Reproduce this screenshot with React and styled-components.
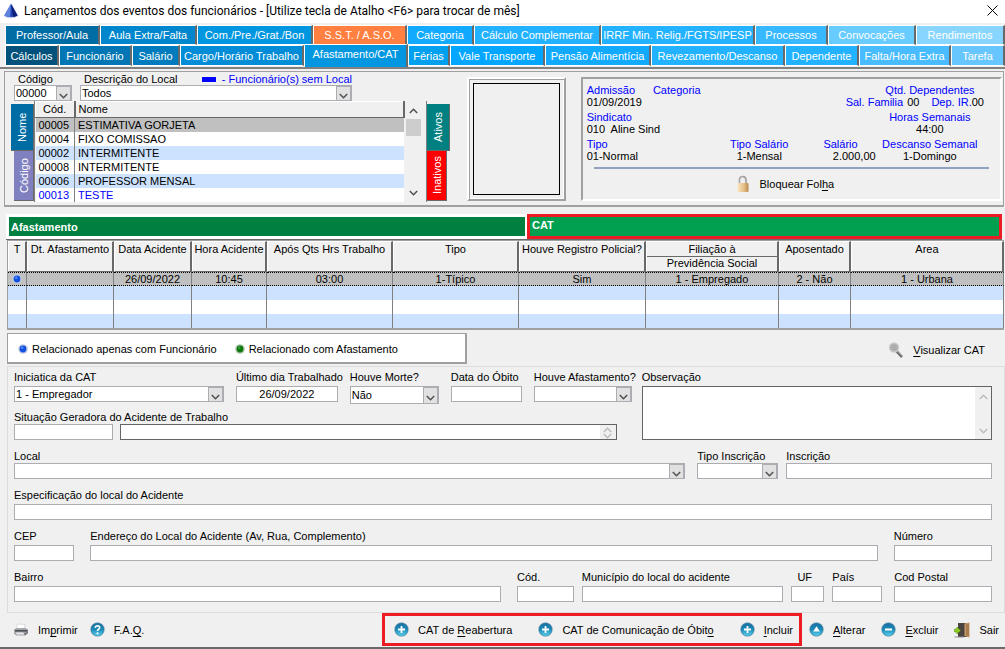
import React from 'react';
import styled, { createGlobalStyle, css } from 'styled-components';

const tabsTop = [
    { label: 'Professor/Aula', color: '#006ca4', size: 95 },
    { label: 'Aula Extra/Falta', color: '#0086cc', size: 97 },
    { label: 'Com./Pre./Grat./Bon', color: '#0096e0', size: 116 },
    { label: 'S.S.T. / A.S.O.', color: '#ff8040', size: 94 },
    { label: 'Categoria', color: '#12aaff', size: 67 },
    { label: 'Cálculo Complementar', color: '#22b2ff', size: 127 },
    { label: 'IRRF Min. Relig./FGTS/IPESP', color: '#22b2ff', size: 154 },
    { label: 'Processos', color: '#38b8ff', size: 73 },
    { label: 'Convocações', color: '#68ccff', size: 88 },
    { label: 'Rendimentos', color: '#88d6ff', size: 89 },
];

const tabsBottom = [
    { label: 'Cálculos', color: '#00527c', size: 54 },
    { label: 'Funcionário', color: '#0076b4', size: 73 },
    { label: 'Salário', color: '#007cbe', size: 48 },
    { label: 'Cargo/Horário Trabalho', color: '#008cd6', size: 124 },
    { label: 'Afastamento/CAT', color: '#0096e0', size: 104, active: true },
    { label: 'Férias', color: '#00a0f0', size: 42 },
    { label: 'Vale Transporte', color: '#00a6ff', size: 95 },
    { label: 'Pensão Alimentícia', color: '#12aaff', size: 106 },
    { label: 'Revezamento/Descanso', color: '#22b2ff', size: 134 },
    { label: 'Dependente', color: '#22b2ff', size: 74 },
    { label: 'Falta/Hora Extra', color: '#48bcff', size: 92 },
    { label: 'Tarefa', color: '#68c6ff', size: 54 },
];

const employees = [
    { code: '00005', name: 'ESTIMATIVA GORJETA', selected: true },
    { code: '00004', name: 'FIXO COMISSAO' },
    { code: '00002', name: 'INTERMITENTE' },
    { code: '00008', name: 'INTERMITENTE' },
    { code: '00006', name: 'PROFESSOR MENSAL' },
    { code: '00013', name: 'TESTE', noPlace: true },
];

const catColumns = [
    { title: 'T', size: 19 },
    { title: 'Dt. Afastamento', size: 87 },
    { title: 'Data Acidente', size: 78 },
    { title: 'Hora Acidente', size: 75 },
    { title: 'Após Qts Hrs Trabalho', size: 126 },
    { title: 'Tipo', size: 126 },
    { title: 'Houve Registro Policial?', size: 127 },
    { title: 'Filiação à', subtitle: 'Previdência Social', size: 133 },
    { title: 'Aposentado', size: 72 },
    { title: 'Area', size: 153 },
];
const catTotal = catColumns.reduce((sum, col) => sum + col.size, 0);

const catRow = ['', '', '26/09/2022', '10:45', '03:00', '1-Típico', 'Sim', '1 - Empregado', '2 - Não', '1 - Urbana'];

/* Icons */

const LogoIcon = () => (
    <svg width='16' height='16' viewBox='0 0 16 16'>
        <path d='M7.5 1 L0.5 13 Q4 15.5 8 15.3 Q12 15.3 15.5 13 L9 1 Z' fill='#c3cbe8' />
        <path d='M8 1 L1.5 12.5 Q4.5 14 8 14 Q11.5 14 14.5 12.5 Z' fill='#2346b8' />
        <path d='M8 1 L1.5 12.5 Q4 13.8 7 14 Z' fill='#5f84e0' />
        <path d='M8 1 L10 14 Q12.5 13.6 14.5 12.5 Z' fill='#0c1f78' />
    </svg>
);

const CloseIcon = () => (
    <svg width='11' height='11' viewBox='0 0 11 11' stroke='#000' fill='none'>
        <path d='M0.5 0.5 L10.5 10.5 M10.5 0.5 L0.5 10.5' />
    </svg>
);

const Chevron = ({ up, color = '#505050' }) => (
    <svg width='9' height='6' viewBox='0 0 9 6' fill='none' stroke={color} strokeWidth='1.5'>
        <path d={up ? 'M0.8 5 L4.5 1.3 L8.2 5' : 'M0.8 1 L4.5 4.7 L8.2 1'} />
    </svg>
);

const LockIcon = () => (
    <svg width='14' height='18' viewBox='0 0 14 18'>
        <defs>
            <linearGradient id='lockBody' x1='0' x2='1'>
                <stop offset='0' stopColor='#fbe7c4' />
                <stop offset='0.6' stopColor='#e3bd85' />
                <stop offset='1' stopColor='#b98a4c' />
            </linearGradient>
        </defs>
        <path d='M3.6 9 V5 Q3.6 1.6 6.8 1.6 Q10 1.6 10 5 V9' fill='none' stroke='#a4a4a4' strokeWidth='1.8' />
        <path d='M4.4 9 V5 Q4.6 2.4 6.8 2.2' fill='none' stroke='#e4e4e4' strokeWidth='0.8' />
        <rect x='1.5' y='8' width='11' height='9' rx='1' fill='url(#lockBody)' />
    </svg>
);

const LensIcon = () => (
    <svg width='16' height='16' viewBox='0 0 16 16'>
        <path d='M8.5 9 L14 15' stroke='#6c6c6c' strokeWidth='2.6' />
        <path d='M9 8.5 L14.5 14' stroke='#c9c9c9' strokeWidth='0.9' />
        <circle cx='6' cy='5.5' r='4.6' fill='#b4b4b4' stroke='#cccccc' strokeWidth='1.2' />
        <path d='M3.2 3.6 H8.8 M2.8 5.5 H9.2 M3.2 7.4 H8.8' stroke='#a0a0a0' strokeWidth='0.6' />
    </svg>
);

const PrinterIcon = () => (
    <svg width='16' height='14' viewBox='0 0 16 14'>
        <path d='M4.5 1 L12 1.5 L11 6 L3.5 6 Z' fill='#fff' stroke='#c8c8c8' strokeWidth='0.6' />
        <path d='M1 6.5 L3.5 5 H12.5 L15 6.5 V10 L12 12.5 H3 L1 10.5 Z' fill='#a4a7ac' />
        <path d='M2 7 H14.5 V8.6 H2 Z' fill='#4a4d52' />
        <path d='M2.5 9.5 H10 L11.5 11.5 H4 Z' fill='#e8e8e8' />
        <path d='M11 10.5 L15 8.8 V10 L12 12.5 Z' fill='#6f7277' />
    </svg>
);

const DoorIcon = () => (
    <svg width='16' height='16' viewBox='0 0 16 16'>
        <path d='M4 1 H14 V15 H4 Z' fill='#4b4542' />
        <path d='M10.5 1.5 L15.5 0.5 V15.5 L10.5 14 Z' fill='#c79a68' />
        <path d='M12 2 L15 1.5 V14.5 L12 13.5 Z' fill='#a87c4d' />
        <path d='M0.5 7 H3 V5 L6.5 8.5 L3 12 V10 H0.5 Z' fill='#8fce1f' stroke='#5c9410' strokeWidth='0.6' />
        <path d='M0.5 15 H10' stroke='#909090' />
    </svg>
);

const roundGlyphs = {
    plus: <path d='M8 4.2 V11.8 M4.2 8 H11.8' stroke='#fff' strokeWidth='1.9' />,
    minus: <path d='M4.2 8 H11.8' stroke='#fff' strokeWidth='2.2' />,
    up: <path d='M8 4.6 L11.6 10.2 H4.4 Z' fill='#fff' />,
    help: (
        <g>
            <path d='M5.6 6.2 Q5.8 4 8.1 4 Q10.4 4.1 10.3 6 Q10.2 7.1 9 7.8 Q8 8.4 8 9.6' fill='none' stroke='#fff' strokeWidth='1.7' />
            <circle cx='8' cy='12' r='1.1' fill='#fff' />
        </g>
    ),
};

const RoundIcon = ({ glyph }) => (
    <svg width='15' height='15' viewBox='0 0 16 16'>
        <defs>
            <linearGradient id={`round-${glyph}`} x1='0' y1='0' x2='0' y2='1'>
                <stop offset='0' stopColor='#1b6f9f' />
                <stop offset='0.5' stopColor='#1a8ab8' />
                <stop offset='1' stopColor='#5fd3ee' />
            </linearGradient>
        </defs>
        <circle cx='8' cy='8' r='7.8' fill='#c3d0d6' />
        <circle cx='8' cy='8' r='7' fill={`url(#round-${glyph})`} stroke='#2a7299' strokeWidth='0.6' />
        {roundGlyphs[glyph]}
    </svg>
);

const Dot = ({ green }) => (
    <svg width='10' height='10' viewBox='0 0 10 10'>
        <circle cx='5' cy='5' r='4.8' fill={green ? '#b4c8b4' : '#c4cdde'} />
        <circle cx='5' cy='5' r='3.4' fill={green ? '#0c7a0c' : '#1450e0'} />
        <circle cx='4.2' cy='3.8' r='1.3' fill={green ? '#3f9c3f' : '#4f8cff'} />
    </svg>
);

/* Small shared parts */

const Select = ({ id, value, tall }) => (
    <SelectBox $tall={tall}>
        <select id={id} defaultValue={value}>
            <option value={value}>{value}</option>
        </select>
        <SelectArrow><Chevron /></SelectArrow>
    </SelectBox>
);

const Field = ({ id, label, grow, gap, indent, tight, children }) => (
    <FieldBox $grow={grow} $gap={gap}>
        <FieldLabel htmlFor={id} $indent={indent} $tight={tight}>{label}</FieldLabel>
        {children || <TextInput id={id} type='text' />}
    </FieldBox>
);

const TabRow = ({ tabs }) => (
    <TabLine>
        {tabs.map(({ label, color, size, active }) => (
            <Tab key={label} type='button' $color={color} $size={size} $active={active}>{label}</Tab>
        ))}
    </TabLine>
);

const Employees = () => (
    <EmployeeArea>
        <Filters>
            <FilterCode>
                <label htmlFor='codigo'>Código</label>
                <Select id='codigo' value='00000' />
            </FilterCode>
            <FilterPlace>
                <PlaceCaption>
                    <label htmlFor='descricao'>Descrição do Local</label>
                    <NoPlace><i />- Funcionário(s) sem Local</NoPlace>
                </PlaceCaption>
                <Select id='descricao' value='Todos' />
            </FilterPlace>
        </Filters>
        <ListArea>
            <SideTabs $left>
                <SideTab type='button' $color='#006ca4' $active>Nome</SideTab>
                <SideTab type='button' $color='#8080c0'>Código</SideTab>
            </SideTabs>
            <EmployeeTable>
                <thead>
                    <tr><th>Cód.</th><th>Nome</th></tr>
                </thead>
                <tbody>
                    {employees.map(({ code, name, selected, noPlace }) => (
                        <EmployeeRow key={code} $selected={selected} $noPlace={noPlace}>
                            <td>{code}</td>
                            <td>{name}</td>
                        </EmployeeRow>
                    ))}
                </tbody>
            </EmployeeTable>
            <ScrollBar>
                <Chevron up />
                <ScrollThumb />
                <Chevron />
            </ScrollBar>
            <SideTabs>
                <SideTab type='button' $color='#008080' $active>Ativos</SideTab>
                <SideTab type='button' $color='#ff0000'>Inativos</SideTab>
            </SideTabs>
        </ListArea>
    </EmployeeArea>
);

const Info = () => (
    <InfoPanel>
        <InfoGrid>
            <Pair><b>Admissão</b><span>01/09/2019</span></Pair>
            <Pair><b>Categoria</b></Pair>
            <Pair $wide $align='flex-end'>
                <Centered><b>Qtd. Dependentes</b></Centered>
                <Dependents><b>Sal. Familia</b> 00 <DepIr><b>Dep. IR.</b>00</DepIr></Dependents>
            </Pair>
            <Pair $span><b>Sindicato</b><span>010&nbsp; Aline Sind</span></Pair>
            <Pair $align='center'><b>Horas Semanais</b><span>44:00</span></Pair>
            <Pair><b>Tipo</b><span>01-Normal</span></Pair>
            <Pair />
            <Pair $align='center'><b>Tipo Salário</b><span>1-Mensal</span></Pair>
            <Pair $align='flex-end'><SalaryLabel>Salário</SalaryLabel><span>2.000,00</span></Pair>
            <Pair $align='center'><b>Descanso Semanal</b><span>1-Domingo</span></Pair>
        </InfoGrid>
        <InfoLine />
        <LockButton type='button'><LockIcon /><span>Bloquear Fol<u>h</u>a</span></LockButton>
    </InfoPanel>
);

const CatGrid = () => (
    <CatTable>
        <colgroup>
            {catColumns.map(({ title, size }) => (
                <col key={title} style={{ width: `${(size / catTotal) * 100}%` }} />
            ))}
        </colgroup>
        <thead>
            <tr>
                {catColumns.map(({ title, subtitle }) => (
                    <th key={title}>
                        {title}
                        {subtitle && <HeadSub>{subtitle}</HeadSub>}
                    </th>
                ))}
            </tr>
        </thead>
        <tbody>
            <tr>
                {catRow.map((value, i) => <td key={catColumns[i].title}>{i === 0 ? <Dot /> : value}</td>)}
            </tr>
            {[1, 2, 3].map((row) => (
                <tr key={row}>{catColumns.map(({ title }) => <td key={title} />)}</tr>
            ))}
        </tbody>
    </CatTable>
);

const CatForm = () => (
    <FormPanel>
        <FormTop>
            <FormLeft>
                <FormRow>
                    <Field id='iniciativa' label='Iniciatica da CAT' grow={210}>
                        <Select id='iniciativa' value='1 - Empregador' />
                    </Field>
                    <Field id='ultimoDia' label='Último dia Trabalhado' grow={102} gap={12}>
                        <TextInput id='ultimoDia' type='text' defaultValue='26/09/2022' $center />
                    </Field>
                    <Field id='morte' label='Houve Morte?' grow={89} gap={12}>
                        <Select id='morte' value='Não' tall />
                    </Field>
                    <Field id='dataObito' label='Data do Óbito' grow={71} gap={12} />
                    <Field id='afastamento' label='Houve Afastamento?' grow={98} gap={12}>
                        <Select id='afastamento' value='' />
                    </Field>
                </FormRow>
                <Situation>
                    <FieldLabel htmlFor='situacao' $tight>Situação Geradora do Acidente de Trabalho</FieldLabel>
                    <SituationInputs>
                        <SituationCode id='situacao' type='text' />
                        <MemoBox $grow={497} $small>
                            <textarea aria-label='Descrição da situação geradora' />
                            <MemoScroll $small><Chevron up color='#bcbcbc' /><Chevron color='#bcbcbc' /></MemoScroll>
                        </MemoBox>
                    </SituationInputs>
                </Situation>
            </FormLeft>
            <Observation>
                <FieldLabel htmlFor='observacao'>Observação</FieldLabel>
                <MemoBox $grow={1}>
                    <textarea id='observacao' />
                    <MemoScroll><Chevron up color='#bcbcbc' /><Chevron color='#bcbcbc' /></MemoScroll>
                </MemoBox>
            </Observation>
        </FormTop>
        <FormRow>
            <Field id='local' label='Local' grow={672} tight><Select id='local' value='' /></Field>
            <Field id='tipoInscricao' label='Tipo Inscrição' grow={81} gap={12} tight><Select id='tipoInscricao' value='' /></Field>
            <Field id='inscricao' label='Inscrição' grow={206} gap={8} tight />
        </FormRow>
        <FormRow>
            <Field id='especificacao' label='Especificação do local do Acidente' grow={1} />
        </FormRow>
        <FormRow>
            <Field id='cep' label='CEP' grow={60} />
            <Field id='endereco' label='Endereço do Local do Acidente (Av, Rua, Complemento)' grow={785} gap={16} />
            <Field id='numero' label='Número' grow={98} gap={16} />
        </FormRow>
        <FormRow>
            <Field id='bairro' label='Bairro' grow={488} />
            <Field id='cod' label='Cód.' grow={57} gap={16} />
            <Field id='municipio' label='Município do local do acidente' grow={202} gap={8} />
            <Field id='uf' label='UF' grow={33} gap={8} indent />
            <Field id='pais' label='País' grow={50} gap={8} />
            <Field id='codPostal' label='Cod Postal' grow={98} gap={12} />
        </FormRow>
    </FormPanel>
);

const App = () => {

    return (
        <Window>
            <GlobalStyle />
            <TitleBar>
                <LogoIcon />
                <h1>Lançamentos dos eventos dos funcionários - [Utilize tecla de Atalho &lt;F6&gt; para trocar de mês]</h1>
                <CloseButton type='button' aria-label='Fechar'><CloseIcon /></CloseButton>
            </TitleBar>
            <TabsNav>
                <TabRow tabs={tabsTop} />
                <TabRow tabs={tabsBottom} />
            </TabsNav>
            <TopPanel>
                <Employees />
                <Photo><div /></Photo>
                <Info />
            </TopPanel>
            <Sections>
                <Section type='button'>Afastamento</Section>
                <Section type='button' $current>CAT</Section>
            </Sections>
            <CatGrid />
            <LegendBar>
                <Legend>
                    <span><Dot />Relacionado apenas com Funcionário</span>
                    <span><Dot green />Relacionado com Afastamento</span>
                </Legend>
                <ViewButton type='button'><LensIcon /><span><u>V</u>isualizar CAT</span></ViewButton>
            </LegendBar>
            <CatForm />
            <Footer>
                <FooterGroup $gap={12}>
                    <Action type='button'><PrinterIcon /><span>Im<u>p</u>rimir</span></Action>
                    <Action type='button'><RoundIcon glyph='help' /><span>F.A.<u>Q</u>.</span></Action>
                </FooterGroup>
                <FooterGroup $gap={16}>
                    <Highlight>
                        <Action type='button'><RoundIcon glyph='plus' /><span>CAT de <u>R</u>eabertura</span></Action>
                        <Action type='button'><RoundIcon glyph='plus' /><span>CAT de Comunicação de Óbit<u>o</u></span></Action>
                        <Action type='button'><RoundIcon glyph='plus' /><span><u>I</u>ncluir</span></Action>
                    </Highlight>
                    <Action type='button'><RoundIcon glyph='up' /><span><u>A</u>lterar</span></Action>
                    <Action type='button'><RoundIcon glyph='minus' /><span><u>E</u>xcluir</span></Action>
                    <Action type='button'><DoorIcon /><span>Sair</span></Action>
                </FooterGroup>
            </Footer>
        </Window>
    );
}

export default App;

const GlobalStyle = createGlobalStyle`
    *, *::before, *::after {
        box-sizing: border-box;
    }
    body {
        margin: 0;
        background: #f0f0f0;
        color: #000;
        font: 11px/14px 'Liberation Sans', Arial, sans-serif;
    }
    button, input, select, textarea {
        margin: 0;
        padding: 0;
        border: 0;
        border-radius: 0;
        background: none;
        color: inherit;
        font: inherit;
        outline: none;
    }
    b, th {
        font-weight: normal;
    }
    svg {
        display: block;
        flex: none;
    }
    u {
        text-underline-offset: 2px;
        text-decoration-skip-ink: none;
    }
`;

const Window = styled.div`
    border-bottom: 2px solid #696969;
    white-space: nowrap;
`;

const TitleBar = styled.header`
    display: flex;
    align-items: center;
    height: 23px;
    padding: 0 6px 2px 3px;
    background: #fff;

    h1 {
        flex: 1;
        margin: 0 0 0 5px;
        font: 12px/16px Roboto, 'Open Sans', sans-serif;
    }
`;

const CloseButton = styled.button`
    padding: 1px;
`;

const TabsNav = styled.nav`
    padding: 2px 0 1px 5px;
    border-bottom: 2px solid #808080;
`;

const TabLine = styled.div`
    display: flex;
    height: 20px;

    & + & {
        height: 21px;
    }
`;

const Tab = styled.button`
    flex: ${({ $size }) => `${$size} 1 ${$size}px`};
    min-width: 0;
    border: 1px solid #fff;
    border-right: 2px solid #696969;
    background: ${({ $color }) => $color};
    color: #fff;

    ${({ $active }) => $active && css`
        margin: -1px 0;
        padding-bottom: 4px;
        border-bottom: 0;
    `}
`;

const TopPanel = styled.section`
    display: flex;
    margin: 2px 1px 0 4px;
    border: 1px solid #a0a0a0;
    border-bottom-width: 2px;
    padding: 1px 0 0 6px;
    height: 136px;
`;

const EmployeeArea = styled.div`
    flex: 458 1 0;
    min-width: 0;
`;

const Filters = styled.div`
    display: flex;
    padding-left: 3px;
    line-height: 12px;

    label {
        padding-left: 4px;
    }
`;

const FilterCode = styled.div`
    flex: none;
    width: 58px;
`;

const FilterPlace = styled.div`
    flex: none;
    width: 272px;
    margin-left: 8px;
`;

const PlaceCaption = styled.div`
    display: flex;
    justify-content: space-between;
`;

const NoPlace = styled.span`
    display: flex;
    align-items: center;
    gap: 6px;
    color: #0000ff;

    i {
        width: 14px;
        height: 5px;
        background: #0000ff;
    }
`;

const SelectBox = styled.div`
    display: flex;
    height: ${({ $tall }) => ($tall ? 18 : 16)}px;
    border: 1px solid #abadb3;
    background: #fff;

    select {
        appearance: none;
        flex: 1;
        min-width: 0;
        padding-left: 1px;
        line-height: 14px;
    }
`;

const SelectArrow = styled.span`
    display: flex;
    flex: none;
    align-items: center;
    justify-content: center;
    width: 15px;
    padding-top: 4px;
    border: solid #abadb3;
    border-width: 1px 1px 0;
    background: #e1e1e1;
    pointer-events: none;
`;

const ListArea = styled.div`
    display: flex;
    height: 101px;
`;

const SideTabs = styled.div`
    display: flex;
    flex-direction: column;
    flex: none;
    align-items: ${({ $left }) => ($left ? 'flex-end' : 'flex-start')};
    width: 24px;
    margin-left: ${({ $left }) => ($left ? 0 : 4)}px;
    padding-top: 3px;
    ${({ $left }) => ($left ? 'border-right' : 'border-left')}: 1px solid #808080;
`;

const SideTab = styled.button`
    height: ${({ $active }) => ($active ? 47 : 50)}px;
    width: ${({ $active }) => ($active ? 23 : 20)}px;
    border: solid #696969;
    border-width: 1px 0 0 1px;
    background: ${({ $color }) => $color};
    color: #fff;
    line-height: 18px;
    writing-mode: vertical-rl;
    transform: rotate(180deg);
`;

const EmployeeTable = styled.table`
    flex: 1;
    align-self: flex-start;
    table-layout: fixed;
    border-collapse: collapse;

    tr {
        height: 14px;
    }
    thead tr {
        height: 16px;
    }
    th, td {
        padding: 0 0 0 3px;
        text-align: left;
    }
    th {
        border: 1px solid #fff;
        border-right: 2px solid #696969;
        border-bottom: 1px solid #696969;
        line-height: 13px;
    }
    th:first-child {
        width: 39px;
        padding-left: 7px;
    }
    td:first-child {
        border-right: 1px solid #808080;
    }
`;

const EmployeeRow = styled.tr`
    background: #fff;
    ${({ $noPlace }) => $noPlace && 'color: #0000ff;'}

    &:nth-child(odd) {
        background: ${({ $selected }) => ($selected ? '#c0c0c0' : '#cce2ff')};
    }
`;

const ScrollBar = styled.div`
    display: flex;
    flex-direction: column;
    align-items: center;
    flex: none;
    width: 16px;
    padding: 7px 0 6px;
    margin-left: 1px;
`;

const ScrollThumb = styled.div`
    width: 15px;
    height: 17px;
    margin: 5px 0 auto;
    background: #cdcdcd;
`;

const Photo = styled.div`
    flex: none;
    width: 99px;
    height: 124px;
    margin: 4px 15px 0 17px;
    padding: 4px;
    border: 2px solid #a0a0a0;
    border-top-color: #fff;
    border-left-color: #fff;
    box-shadow: inset 1px 1px 0 #a0a0a0, inset -1px -1px 0 #fff;

    div {
        height: 100%;
        border: 1px solid #000;
    }
`;

const InfoPanel = styled.section`
    flex: 420 1 0;
    min-width: 0;
    height: 124px;
    padding: 5px 11px 0 4px;
    margin: 4px 1px 0 0;
    border: 2px solid #a0a0a0;
    border-right-color: #fff;
    border-bottom-color: #fff;
    line-height: 12px;

    b {
        color: #0000ff;
    }
`;

const InfoGrid = styled.div`
    display: grid;
    grid-template-columns: 66fr 62fr 88fr 72fr 108fr;
    row-gap: 3px;
    padding-right: 5px;
`;

const Pair = styled.div`
    display: flex;
    flex-direction: column;
    align-items: ${({ $align }) => $align || 'flex-start'};
    min-width: 0;
    ${({ $wide }) => $wide && 'grid-column: 4 / 6;'}
    ${({ $span }) => $span && 'grid-column: 1 / 5;'}
`;

const Centered = styled.div`
    width: 108px;
    text-align: center;
`;

const Dependents = styled.div`
    display: flex;
    gap: 4px;
`;

const DepIr = styled.span`
    margin-left: 8px;
`;

const SalaryLabel = styled.b`
    padding-right: 18px;
`;

const InfoLine = styled.hr`
    height: 2px;
    margin: 5px 0 6px 7px;
    border: 0;
    background: #8fa3bf;
`;

const LockButton = styled.button`
    display: flex;
    align-items: center;
    gap: 10px;
    margin: 0 auto;
    padding-right: 6px;
`;

const Sections = styled.div`
    display: flex;
    align-items: stretch;
    height: 26px;
    margin: 7px 3px 0 6px;
    border-bottom: 1px solid #696969;
`;

const Section = styled.button`
    flex: ${({ $current }) => ($current ? '475 1 475px' : '521 1 521px')};
    padding: 0 2px;
    border: solid #fff;
    border-width: 3px 2px 3px 3px;
    background: #008040;
    color: #fff;
    font-weight: bold;
    text-align: left;

    ${({ $current }) => $current && css`
        padding-bottom: 4px;
        border: 3px solid #ed1c24;
        background: #00a050;
    `}
`;

const CatTable = styled.table`
    width: calc(100% - 8px);
    margin: 0 1px 0 7px;
    table-layout: fixed;
    border-collapse: separate;
    border-spacing: 0;
    border-top: 1px solid #a0a0a0;
    border-left: 1px solid #a0a0a0;
    border-bottom: 2px solid #a0a0a0;
    text-align: center;

    th {
        height: 31px;
        padding: 0;
        border: 1px solid #fff;
        border-right: 2px solid #696969;
        border-bottom: 1px solid #696969;
        vertical-align: top;
    }
    td {
        height: 14px;
        padding: 0;
        border-right: 1px solid #808080;
        line-height: 12px;
    }
    tbody tr {
        background: #fff;
    }
    tbody tr:nth-child(even) {
        background: #cce2ff;
    }
    tbody tr:first-child {
        background: #c0c0c0;
    }
    tbody tr:first-child td {
        border-top: 1px dotted #000;
        border-bottom: 1px dotted #000;
    }
    td svg {
        margin: 0 auto;
    }
`;

const HeadSub = styled.div`
    border-top: 1px solid #696969;
    line-height: 13px;
`;

const LegendBar = styled.div`
    display: flex;
    align-items: center;
    justify-content: space-between;
    margin: 3px 0 0 7px;
    padding-right: 20px;
`;

const Legend = styled.div`
    display: flex;
    flex: none;
    align-items: center;
    gap: 18px;
    height: 31px;
    width: 460px;
    padding: 2px 0 0 10px;
    border: 1px solid #a0a0a0;
    border-right-width: 2px;
    border-bottom-width: 2px;
    background: #fff;

    span {
        display: flex;
        align-items: center;
        gap: 4px;
    }
`;

const ViewButton = styled.button`
    display: flex;
    align-items: center;
    gap: 9px;
    padding-top: 2px;
`;

const FormPanel = styled.form`
    margin: 2px 0 0 7px;
    padding: 3px 12px 10px 6px;
    border: 1px solid #dcdcdc;
    display: flex;
    flex-direction: column;
    gap: 9px;
`;

const FormTop = styled.div`
    display: flex;
    gap: 10px;
`;

const FormLeft = styled.div`
    flex: 617 1 0;
    min-width: 0;
`;

const FormRow = styled.div`
    display: flex;
    align-items: flex-start;
`;

const FieldBox = styled.div`
    flex: ${({ $grow }) => $grow} 1 0;
    min-width: 0;
    margin-left: ${({ $gap }) => $gap || 0}px;
`;

const FieldLabel = styled.label`
    display: block;
    margin-bottom: ${({ $tight }) => ($tight ? 0 : 2)}px;
    padding-left: ${({ $indent }) => ($indent ? 6 : 0)}px;
`;

const TextInput = styled.input`
    display: block;
    width: 100%;
    height: 16px;
    border: 1px solid #abadb3;
    background: #fff;
    text-align: ${({ $center }) => ($center ? 'center' : 'left')};
`;

const Situation = styled.div`
    padding: 6px 15px 0 0;
`;

const SituationInputs = styled.div`
    display: flex;
    gap: 7px;
`;

const SituationCode = styled(TextInput)`
    flex: 98 1 0;
    min-width: 0;
`;

const MemoBox = styled.div`
    display: flex;
    flex: ${({ $grow }) => $grow} 1 0;
    min-height: 0;
    ${({ $small }) => $small && 'height: 16px;'}
    border: 1px solid #646464;
    background: #fff;

    textarea {
        flex: 1;
        min-width: 0;
        height: 100%;
        resize: none;
    }
`;

const MemoScroll = styled.div`
    display: flex;
    flex-direction: column;
    align-items: center;
    justify-content: space-between;
    width: 16px;
    padding: ${({ $small }) => ($small ? '2px 0 0' : '7px 0 5px')};
    background: #f0f0f0;
`;

const Observation = styled.div`
    display: flex;
    flex-direction: column;
    flex: 350 1 0;
`;

const Footer = styled.footer`
    display: flex;
    align-items: center;
    justify-content: space-between;
    padding: 0 6px 1px 13px;
`;

const FooterGroup = styled.div`
    display: flex;
    align-items: center;
    gap: ${({ $gap }) => $gap}px;
`;

const Highlight = styled.div`
    display: flex;
    align-items: center;
    gap: 26px;
    height: 33px;
    margin-right: -9px;
    padding: 0 6px 0 9px;
    border: 3px solid #ed1c24;
`;

const Action = styled.button`
    display: flex;
    align-items: center;
    gap: 9px;
`;
